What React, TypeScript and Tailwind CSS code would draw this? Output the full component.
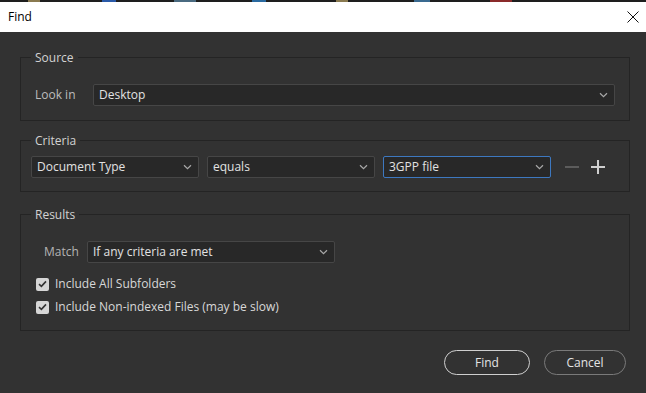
import React from "react";

const font = { fontFamily: '"Open Sans", "Noto Sans", sans-serif' };

function Chevron({ color = "#a8a8a8" }: { color?: string }) {
  return (
    <svg width="9" height="6" viewBox="0 0 9 6" fill="none">
      <path d="M1 1.2 L4.5 4.6 L8 1.2" stroke={color} strokeWidth="1.2" />
    </svg>
  );
}

function Select({
  value,
  className = "",
  active = false,
}: {
  value: string;
  className?: string;
  active?: boolean;
}) {
  return (
    <div
      className={`h-[22px] flex items-center justify-between pl-[5px] pr-[6px] rounded-[2px] bg-[#282828] border ${
        active ? "border-[#3d78c0]" : "border-[#464646]"
      } ${className}`}
    >
      <span className="text-[12px] text-[#e2e2e2] leading-none">{value}</span>
      <Chevron />
    </div>
  );
}

function Check({ label }: { label: string }) {
  return (
    <div className="h-[20px] flex items-center gap-[6px]">
      <div className="w-[13px] h-[13px] rounded-[2px] bg-[#d6d6d6] flex items-center justify-center">
        <svg width="9" height="8" viewBox="0 0 9 8" fill="none">
          <path d="M1 4.2 L3.4 6.4 L8 1.4" stroke="#333" strokeWidth="1.6" />
        </svg>
      </div>
      <span className="text-[12px] text-[#d8d8d8]">{label}</span>
    </div>
  );
}

function Group({
  title,
  children,
  className = "",
  bodyClass = "",
}: {
  title: string;
  children: React.ReactNode;
  className?: string;
  bodyClass?: string;
}) {
  return (
    <fieldset className={`border border-[#242424] ${className}`}>
      <legend className="ml-[10px] px-[4px] text-[12px] leading-[17px] text-[#d2d2d2]">
        {title}
      </legend>
      <div className={bodyClass}>{children}</div>
    </fieldset>
  );
}

export default function App() {
  return (
    <div className="w-[646px] h-[393px] bg-[#323232] flex flex-col overflow-hidden" style={font}>
      <div className="h-[2px] bg-[#1e1e1e] flex">
        <div className="ml-[28px] w-[12px] bg-[#8a7a50]" />
        <div className="ml-[62px] w-[14px] bg-[#2a5aa8]" />
        <div className="ml-[58px] w-[22px] bg-[#4a6a80]" />
        <div className="ml-[56px] w-[14px] bg-[#2a6aa0]" />
        <div className="ml-[70px] w-[12px] bg-[#8a7a50]" />
        <div className="ml-[66px] w-[16px] bg-[#3a6a90]" />
        <div className="ml-[60px] w-[22px] bg-[#8a2a2a]" />
      </div>
      <div className="h-[30px] bg-white flex items-center justify-between pl-[8px] pr-[6px]">
        <span className="text-[12px] text-black">Find</span>
        <svg width="14" height="14" viewBox="0 0 14 14" fill="none">
          <path d="M1.5 1.5 L12.5 12.5 M12.5 1.5 L1.5 12.5" stroke="#111" strokeWidth="1" />
        </svg>
      </div>
      <div className="flex flex-col pl-[20px] pr-[16px] pt-[17px]">
        <Group title="Source" bodyClass="px-[14px] pt-[18px] pb-[14px]">
          <div className="flex items-center">
            <span className="w-[58px] text-[12px] text-[#bdbdbd]">Look in</span>
            <Select value="Desktop" className="flex-1" />
          </div>
        </Group>
        <Group title="Criteria" className="mt-[11px]" bodyClass="pl-[10px] pt-[7px] pb-[13px]">
          <div className="flex items-center gap-[8px]">
            <Select value="Document Type" className="w-[168px]" />
            <Select value="equals" className="w-[168px]" />
            <Select value="3GPP file" className="w-[168px]" active />
            <div className="flex items-center gap-[12px] ml-[6px]">
              <svg width="14" height="14" viewBox="0 0 14 14">
                <path d="M0 7 H14" stroke="#5c5c5c" strokeWidth="2" />
              </svg>
              <svg width="14" height="14" viewBox="0 0 14 14">
                <path d="M0 7 H14 M7 0 V14" stroke="#cfcfcf" strokeWidth="2" />
              </svg>
            </div>
          </div>
        </Group>
        <Group title="Results" className="mt-[14px]" bodyClass="pl-[15px] pt-[18px] pb-[13px]">
          <div className="flex items-center">
            <span className="w-[51px] pl-[8px] text-[12px] text-[#b4b4b4]">Match</span>
            <Select value="If any criteria are met" className="w-[248px]" />
          </div>
          <div className="mt-[11px] flex flex-col gap-[3px]">
            <Check label="Include All Subfolders" />
            <Check label="Include Non-indexed Files (may be slow)" />
          </div>
        </Group>
        <div className="mt-[19px] mr-[4px] flex justify-end gap-[14px]">
          <button className="w-[86px] h-[25px] rounded-full border-[1.5px] border-[#cfcfcf] text-[12px] text-[#e4e4e4]">
            Find
          </button>
          <button className="w-[82px] h-[25px] rounded-full border-[1.5px] border-[#7a7a7a] text-[12px] text-[#e4e4e4]">
            Cancel
          </button>
        </div>
      </div>
    </div>
  );
}
